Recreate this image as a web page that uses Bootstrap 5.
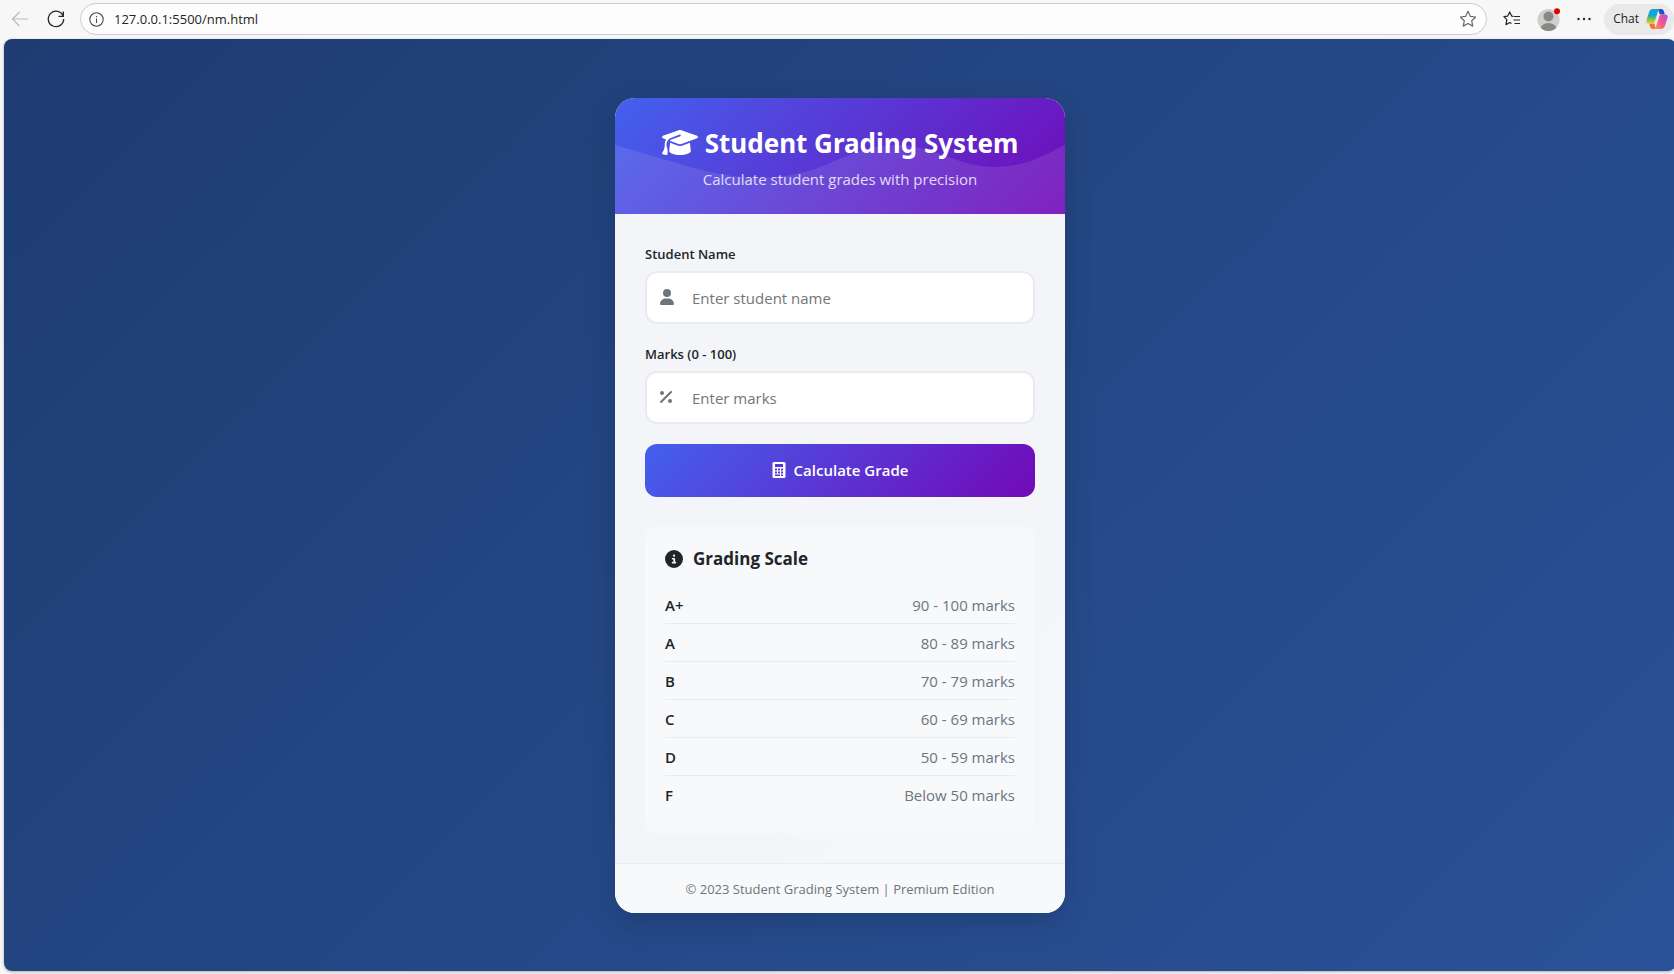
<!DOCTYPE html>
<html lang="en">
<head>
<meta charset="utf-8">
<meta name="viewport" content="width=device-width, initial-scale=1">
<title>Student Grading System</title>
<link href="https://cdn.jsdelivr.net/npm/bootstrap@5.3.0/dist/css/bootstrap.min.css" rel="stylesheet">
<style>
  body { font-family: "Open Sans", "Noto Sans", sans-serif; font-size: 15px; line-height: 22px; color: #212529; background: #f7f7f7; overflow-x: hidden; }
  svg { display: block; flex: none; }

  /* Browser toolbar */
  .toolbar { height: 39px; padding: 0 0 1px 10px; color: #242424; }
  .tool-btn { background: none; border: 0; padding: 0; color: inherit; }
  .address { height: 32px; border: 1px solid #cdcdcd; border-radius: 16px; background: #fdfdfd; padding: 0 8px; margin-left: 14px; }
  .address input { border: 0; outline: 0; background: none; font-size: 13px; color: #242424; padding: 0; margin-left: 10px; min-width: 0; }
  .chat-btn { height: 31px; border: 0; border-radius: 16px; background: #e9e9e9; padding: 0 6px 0 9px; margin-left: 12px; font-size: 12px; color: #242424; gap: 7px; }

  /* Page */
  .viewport { margin: 0 -2px 3px 4px; min-height: calc(100vh - 42px); border-radius: 8px; background: linear-gradient(135deg, #1e3c72 0%, #2a5298 100%); box-shadow: 0 1px 3px rgba(0, 0, 0, .3); padding: 20px; }
  .grade-card { width: 100%; max-width: 450px; border-radius: 20px; background: rgba(255, 255, 255, .95); box-shadow: 0 10px 30px rgba(0, 0, 0, .15); overflow: hidden; }
  .grade-head { height: 116px; background: linear-gradient(135deg, #4361ee 0%, #7209b7 100%); color: #fff; padding-top: 26px; }
  .grade-head > * { position: relative; }
  .grade-head .wave { position: absolute; inset: 0; width: 100%; height: 100%; }
  .grade-head h1 { font-family: "Noto Sans", sans-serif; font-size: 26px; line-height: 38px; font-weight: 700; margin: 0 0 6px; gap: 7px; }
  .grade-head p { opacity: .8; margin: 0; }
  .grade-body { padding: 30px; }
  .field-label { display: block; font-size: 13px; line-height: 20px; font-weight: 600; margin-bottom: 7px; }
  .field-box { margin-bottom: 20px; }
  .field-box svg { position: absolute; left: 15px; top: 18px; color: #6c757d; }
  .field-box input { width: 100%; height: 53px; border: 2px solid #e9ecef; border-radius: 12px; background: #fff; padding: 2px 15px 0 45px; }
  .field-box input::placeholder { color: #757575; opacity: 1; }
  .calc-btn { width: 100%; height: 53px; border: 0; border-radius: 12px; background: linear-gradient(135deg, #4361ee 0%, #7209b7 100%); color: #fff; font-weight: 600; }
  .scale-box { margin-top: 30px; padding: 20px; border-radius: 12px; background: #f8f9fb; }
  .scale-box h2 { font-size: 17px; line-height: 24px; font-weight: 700; margin: 0 0 15px; gap: 10px; }
  .scale-table { width: 100%; }
  .scale-table th, .scale-table td { height: 38px; border-bottom: 1px solid #e9ecef; padding: 1px 0 0; }
  .scale-table th { font-weight: 600; }
  .scale-table td { color: #6c757d; text-align: right; }
  .scale-table tr:last-child > * { height: 37px; border-bottom: 0; }
  .grade-foot { border-top: 1px solid #e9ecef; background: #f8f9fb; color: #6c757d; font-size: 13px; line-height: 19px; padding: 16px 15px 14px; }
</style>
</head>
<body>
<header class="toolbar d-flex align-items-center">
  <button class="tool-btn" type="button" aria-label="Back"><svg width="20" height="20" viewBox="0 0 20 20" fill="none" stroke="#b9b9b9" stroke-width="1.2"><path d="M18 10H2.5M9.5 3L2.5 10l7 7"/></svg></button>
  <button class="tool-btn ms-3" type="button" aria-label="Refresh"><svg width="20" height="20" viewBox="0 0 20 20" fill="none" stroke="currentColor" stroke-width="1.3"><path d="M17.2 7.2A7.7 7.7 0 1 0 17.7 10M17.3 2.5v4.8h-4.8"/></svg></button>
  <div class="address d-flex align-items-center flex-grow-1">
    <svg width="15" height="15" viewBox="0 0 15 15" fill="none" stroke="#4a4a4a" stroke-width="1.1"><circle cx="7.5" cy="7.5" r="6.7"/><path d="M7.5 6.500v4.500M7.500 4v1.300"/></svg>
    <input class="flex-grow-1" type="text" aria-label="Address" value="127.0.0.1:5500/nm.html">
    <button class="tool-btn" type="button" aria-label="Add to favorites"><svg width="20" height="20" viewBox="0 0 20 20" fill="none" stroke="#6a6a6a" stroke-width="1.2" stroke-linejoin="round"><path d="M10 2.300l2.300 5 5.300.7-3.900 3.700 1 5.400L10 14.500l-4.700 2.600 1-5.400L2.400 8l5.300-.7z"/></svg></button>
  </div>
  <button class="tool-btn ms-3" type="button" aria-label="Favorites"><svg width="18" height="18" viewBox="0 0 18 18" fill="none" stroke="currentColor" stroke-width="1.2" stroke-linejoin="round"><path d="M10.500 6.300L8.700 6.100 6.700 1.900 4.700 6.100.9 6.700l2.900 3-.8 5 3.700-2.100 1.800 1M11 6.500h6M10.500 10h6.500M11.500 13.500H17"/></svg></button>
  <button class="tool-btn ms-3" type="button" aria-label="Profile"><svg width="23" height="23" viewBox="0 0 23 23"><defs><clipPath id="pf"><circle cx="11.5" cy="12" r="11"/></clipPath></defs><g clip-path="url(#pf)"><rect width="23" height="23" fill="#d0cfcb"/><circle cx="11.5" cy="8.5" r="5" fill="#8a8886"/><ellipse cx="11.5" cy="21" rx="8" ry="6" fill="#8a8886"/></g><circle cx="20" cy="3.2" r="3" fill="#e60000"/></svg></button>
  <button class="tool-btn ms-3" type="button" aria-label="Settings and more"><svg width="16" height="16" viewBox="0 0 16 16" fill="currentColor"><circle cx="2.5" cy="8" r="1.2"/><circle cx="8" cy="8" r="1.2"/><circle cx="13.5" cy="8" r="1.2"/></svg></button>
  <button class="chat-btn d-flex align-items-center" type="button">Chat
    <svg width="22" height="22" viewBox="0 0 22 22">
      <defs>
        <linearGradient id="cpL" x1="0" y1="0" x2="0" y2="1"><stop offset="0" stop-color="#1b9de2"/><stop offset=".45" stop-color="#17a9c9"/><stop offset=".75" stop-color="#8fc93a"/><stop offset="1" stop-color="#f5c518"/></linearGradient>
        <linearGradient id="cpR" x1="1" y1="0" x2="0" y2="1"><stop offset="0" stop-color="#b04be8"/><stop offset=".5" stop-color="#f0598c"/><stop offset="1" stop-color="#ff9a4d"/></linearGradient>
      </defs>
      <path d="M12 1h3q2.200 0 2.800 2l1 3.500h-5z" fill="#1f4fc4"/>
      <path d="M10 21H7q-2.200 0-2.800-2l-1-3.500h5z" fill="#f2702f"/>
      <path d="M6.500 1H14q-1.500.4-2 2.200L8.800 13.500Q8 15.600 6 15.600H3Q-.3 15.600.5 12L3.300 3.400Q4.200 1 6.500 1z" fill="url(#cpL)"/>
      <path d="M15.500 21H8q1.500-.4 2-2.200l3.200-10.300Q14 6.400 16 6.400h3q3.300 0 2.500 3.600l-2.800 8.600Q17.800 21 15.500 21z" fill="url(#cpR)"/>
    </svg>
  </button>
</header>

<main class="viewport d-flex align-items-center justify-content-center">
  <section class="grade-card">
    <header class="grade-head position-relative text-center">
      <svg class="wave" viewBox="0 0 450 116" preserveAspectRatio="none" fill="#fff" fill-opacity=".1"><path d="M0 47L75 69C115 80 150 84 190 74C220 66 240 49 278 47C320 46 340 69 380 69C410 69 430 57 450 47V116H0z"/></svg>
      <h1 class="d-flex justify-content-center align-items-center"><svg width="36" height="29" viewBox="0 0 640 512" fill="currentColor"><path d="M320 32c-8.100 0-16.100 1.400-23.700 4.100L15.800 137.400C6.300 140.900 0 149.900 0 160s6.300 19.100 15.800 22.600l57.900 20.900C57.300 229.300 48 259.800 48 291.900v28.100c0 28.400-10.800 57.700-22.300 80.800c-6.500 13-13.900 25.800-22.500 37.600C0 442.700-.9 448.300 .9 453.400s6 8.900 11.200 10.200l64 16c4.200 1.100 8.700 .3 12.400-2s6.300-6.100 7.100-10.400c8.600-42.800 4.300-81.200-2.100-108.700C90.300 344.300 86 329.800 80 316.500V291.900c0-30.200 10.200-58.700 27.900-81.500c12.900-15.500 29.600-28 49.200-35.700l157-61.700c8.200-3.200 17.500 .8 20.700 9s-.8 17.500-9 20.700l-157 61.700c-12.400 4.900-23.300 12.400-32.200 21.600l159.600 57.600c7.600 2.700 15.600 4.100 23.700 4.100s16.100-1.400 23.700-4.100L624.200 182.600c9.500-3.400 15.800-12.500 15.800-22.600s-6.300-19.100-15.800-22.600L343.700 36.100C336.100 33.400 328.100 32 320 32zM128 408c0 35.300 86 72 192 72s192-36.700 192-72L496.700 262.600 354.500 314c-11.100 4-22.800 6-34.500 6s-23.500-2-34.500-6L143.300 262.600 128 408z"/></svg>Student Grading System</h1>
      <p>Calculate student grades with precision</p>
    </header>
    <div class="grade-body">
      <form>
        <label class="field-label" for="studentName">Student Name</label>
        <div class="field-box position-relative">
          <input id="studentName" type="text" placeholder="Enter student name">
          <svg width="14" height="16" viewBox="0 0 448 512" fill="currentColor"><path d="M224 256A128 128 0 1 0 224 0a128 128 0 1 0 0 256zm-45.700 48C79.800 304 0 383.800 0 482.300C0 498.700 13.300 512 29.700 512l388.600 0c16.400 0 29.700-13.300 29.700-29.700C448 383.800 368.200 304 269.700 304l-91.400 0z"/></svg>
        </div>
        <label class="field-label" for="marks">Marks (0 - 100)</label>
        <div class="field-box position-relative">
          <input id="marks" type="text" inputmode="numeric" placeholder="Enter marks">
          <svg width="12" height="16" viewBox="0 0 384 512" fill="currentColor"><path d="M374.600 118.600c12.500-12.500 12.500-32.800 0-45.300s-32.800-12.500-45.300 0l-320 320c-12.500 12.500-12.500 32.800 0 45.300s32.800 12.500 45.300 0l320-320zM128 128A64 64 0 1 0 0 128a64 64 0 1 0 128 0zM384 384a64 64 0 1 0 -128 0 64 64 0 1 0 128 0z"/></svg>
        </div>
        <button class="calc-btn d-flex align-items-center justify-content-center gap-2" type="button"><svg width="14" height="16" viewBox="0 0 14 16"><rect x=".5" width="13" height="16" rx="1.5" fill="#fff"/><path d="M3 2h8v3H3zM3 6.500h2v2H3zM6 6.500h2v2H6zM9 6.500h2v2H9zM3 9.500h2v2H3zM6 9.500h2v2H6zM9 9.500h2v2H9zM9 12.500h2v1.500H9zM3 12.500h5v1.500H3z" fill="#5538d6"/></svg>Calculate Grade</button>
      </form>
      <section class="scale-box">
        <h2 class="d-flex align-items-center"><svg width="18" height="18" viewBox="0 0 512 512" fill="currentColor"><path d="M256 512A256 256 0 1 0 256 0a256 256 0 1 0 0 512zM216 336l24 0 0-64-24 0c-13.300 0-24-10.700-24-24s10.700-24 24-24l48 0c13.300 0 24 10.700 24 24l0 88 8 0c13.300 0 24 10.700 24 24s-10.700 24-24 24l-80 0c-13.300 0-24-10.700-24-24s10.700-24 24-24zm40-208a32 32 0 1 1 0 64 32 32 0 1 1 0-64z"/></svg>Grading Scale</h2>
        <table class="scale-table">
          <tbody>
            <tr><th scope="row">A+</th><td>90 - 100 marks</td></tr>
            <tr><th scope="row">A</th><td>80 - 89 marks</td></tr>
            <tr><th scope="row">B</th><td>70 - 79 marks</td></tr>
            <tr><th scope="row">C</th><td>60 - 69 marks</td></tr>
            <tr><th scope="row">D</th><td>50 - 59 marks</td></tr>
            <tr><th scope="row">F</th><td>Below 50 marks</td></tr>
          </tbody>
        </table>
      </section>
    </div>
    <footer class="grade-foot text-center">© 2023 Student Grading System | Premium Edition</footer>
  </section>
</main>
<script src="https://cdn.jsdelivr.net/npm/bootstrap@5.3.0/dist/js/bootstrap.bundle.min.js"></script>
</body>
</html>
